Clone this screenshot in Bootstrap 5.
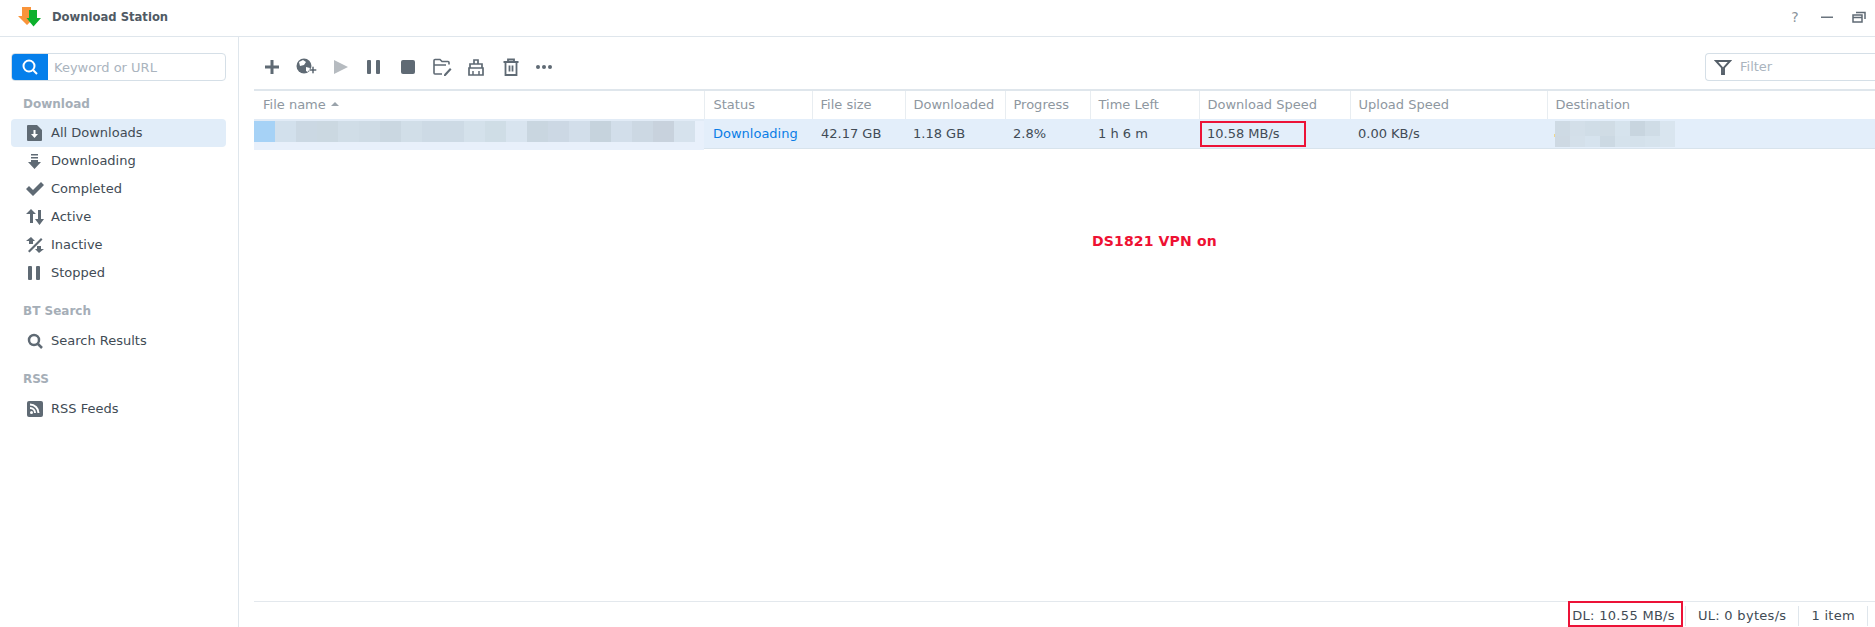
<!DOCTYPE html>
<html lang="en"><head><meta charset="utf-8"><title>Download Station</title>
<link href="https://cdn.jsdelivr.net/npm/bootstrap@5.3.0/dist/css/bootstrap.min.css" rel="stylesheet">
<style>
html,body{height:100%}
body{font-family:"DejaVu Sans",Verdana,sans-serif;font-size:13px;color:#414b55;background:#fff;overflow:hidden}
.app-shell{width:1875px;height:627px}
.title-bar{height:37px;border-bottom:1px solid #dfe6ec;padding:0 9px 0 18px}
.title-logo{margin-top:-2px}
.title-text{font-weight:700;font-size:11.6px;color:#505a64;margin-left:10px;margin-top:-1px}
.help-mark{width:14px;text-align:center;font-size:14px;color:#8b949c}
.win-ctl{gap:18px;margin-top:-2px}
.side-pane{width:239px;border-right:1px solid #dfe6ec;padding:16px 12px 0 11px}
.search-box{height:28px;border:1px solid #d5dfe7;border-radius:4px;overflow:hidden}
.search-btn{width:37px;background:#057feb;margin:-1px 0 -1px -1px}
.search-hint{color:#aab4be;padding:1px 0 0 6px;font-size:13px}
.sec-label{font-weight:700;font-size:12px;color:#a5aeb7;padding-left:12px;line-height:16px}
.nav-row{height:28px;border-radius:4px;padding-left:13px}
.nav-row.is-on{background:#e1edf9}
.nav-icon{width:22px;height:20px;flex:none;margin-right:5px}
.main-pane{min-width:0;padding:0 0 0 15px}
.tool-bar{height:52px;padding:8px 0 0 7px}
.tool-ico{width:22px;height:22px;flex:none;margin-right:12px}
.filter-box{width:170px;height:28px;border:1px solid #d5dfe7;border-right:0;border-radius:4px 0 0 4px;color:#aab4be;padding-left:8px}
.grid-tbl{table-layout:fixed;width:1621px;border-collapse:collapse;margin:0}
.grid-tbl th{height:29px;font-weight:400;color:#8e979f;padding:0 8px;border-top:2px solid #dfe6ec;border-right:1px solid #e8edf1;white-space:nowrap;font-size:13px}
.grid-tbl th:first-child{padding-left:9px}
.grid-tbl th:last-child{border-right:0}
.grid-tbl td{height:29px;background:#e3eefa;border-bottom:1px solid #d8e3ec;padding:0 8px;color:#414b55;white-space:nowrap;position:relative;font-size:13px}
.grid-tbl th:nth-child(2),.grid-tbl td:nth-child(2),.grid-tbl td:nth-child(3){padding-left:9px}
.grid-tbl td.name-cell{background:#e8f0fb;border-bottom:0;padding:0}
.grid-tbl td.name-cell::after{content:"";position:absolute;left:0;right:0;bottom:-2px;height:2px;background:#e8f0fb}
.grid-tbl td.dest-cell{padding:2px 0 0;vertical-align:top}
.mosaic-row{padding-top:2px;background:linear-gradient(#e1ebf6 2px,transparent 2px)}
.mosaic-row span{width:21px;height:21px;display:block}
.dest-grid{display:grid;grid-template-columns:repeat(8,15px);grid-template-rows:15px 11px;margin-left:8px;position:relative}
.dest-grid::before{content:"";position:absolute;left:-1px;top:13px;width:1px;height:3px;background:#efd78c}
.sort-up{display:inline-block;border:4px solid transparent;border-bottom:4px solid #9aa3ab;border-top:0;margin-left:5px;vertical-align:middle;position:relative;top:-2px}
.status-link{color:#0a7de6}
.mark-box{border:2px solid #ec1237;position:absolute;pointer-events:none}
.mark-speed{left:1px;top:2px;width:106px;height:26px}
.note-text{color:#ee1133;font-weight:700;font-size:14px;letter-spacing:.15px;margin-top:82px;padding-left:838px;line-height:20px}
.status-bar{height:26px;border-top:1px solid #e3e8ed;padding:3px 7px 0 0;letter-spacing:.3px}
.stat-cell{position:relative;height:20px;padding:0 12px;border-right:1px solid #dfe6ec;line-height:20px;white-space:nowrap}
.stat-cell:first-child{border-right:0;padding-right:10px}
.stat-sep{width:1px;height:20px;background:#dfe6ec}
.mark-dl{left:8px;top:-5px;width:115px;height:26px}
</style></head>
<body>
<div class="app-shell d-flex flex-column">
 <header class="title-bar d-flex align-items-center flex-none">
  <svg class="title-logo" width="24" height="20" viewBox="0 0 24 20"><path d="M4 0h9v9h5l-9 9-9-9h4z" fill="#f9943a"/><path d="M11 3h8v8h4l-7.500 8.500L8.500 11H11z" fill="#0cb02c"/></svg>
  <span class="title-text">Download Station</span>
  <div class="win-ctl ms-auto d-flex align-items-center">
   <span class="help-mark">?</span>
   <svg width="14" height="14" viewBox="0 0 14 14"><rect x="1" y="6.500" width="12" height="1.500" fill="#6a747e"/></svg>
   <svg width="14" height="14" viewBox="0 0 14 14" fill="none" stroke="#5f6a74" stroke-width="1.500"><rect x="1" y="5" width="9" height="7"/><path d="M1 7.500h9M4 2.500h9V9" /></svg>
  </div>
 </header>
 <div class="d-flex flex-grow-1" style="min-height:0">
  <aside class="side-pane flex-none">
   <div class="search-box d-flex align-items-stretch">
    <div class="search-btn d-flex align-items-center justify-content-center"><svg width="16" height="16" viewBox="0 0 16 16" fill="none" stroke="#fff" stroke-width="2"><circle cx="7" cy="7" r="5.500"/><path d="M11 11l4 4"/></svg></div>
    <div class="search-hint d-flex align-items-center">Keyword or URL</div>
   </div>
   <div class="sec-label" style="margin-top:15px;margin-bottom:7px">Download</div>
   <div class="nav-row is-on d-flex align-items-center"><svg class="nav-icon" viewBox="0 0 22 20"><path d="M4 2h9l5 5v10a1 1 0 0 1-1 1H4a1 1 0 0 1-1-1V3a1 1 0 0 1 1-1z" fill="#5f6a74"/><path d="M9.500 7h2v4H14l-3.500 4L7 11h2.500z" fill="#fff"/></svg><span>All Downloads</span></div>
   <div class="nav-row d-flex align-items-center"><svg class="nav-icon" viewBox="0 0 22 20"><path d="M7 3h7v1.500H7zM7 6h7v1.500H7zM7 9h7v2h3l-6.500 7L4 11h3z" fill="#5f6a74"/></svg><span>Downloading</span></div>
   <div class="nav-row d-flex align-items-center"><svg class="nav-icon" viewBox="0 0 22 20"><path d="M2 10l3-3 4 4 8-8 3 3-11 11z" fill="#5f6a74"/></svg><span>Completed</span></div>
   <div class="nav-row d-flex align-items-center"><svg class="nav-icon" viewBox="0 0 22 20"><path d="M7 2l5 5H9v9H6V7H2zM14 3h3v9h3l-4.500 6L11 12h3z" fill="#5f6a74"/></svg><span>Active</span></div>
   <div class="nav-row d-flex align-items-center"><svg class="nav-icon" viewBox="0 0 22 20"><path d="M7 2l4 4H9v3H5V6H2zM15 18l-4-4h2v-3h4v3h3zM4 16L17 3l1.500 1.500L5.500 17.500z" fill="#5f6a74"/></svg><span>Inactive</span></div>
   <div class="nav-row d-flex align-items-center"><svg class="nav-icon" viewBox="0 0 22 20"><rect x="4" y="3" width="4" height="14" rx="1" fill="#5f6a74"/><rect x="12" y="3" width="4" height="14" rx="1" fill="#5f6a74"/></svg><span>Stopped</span></div>
   <div class="sec-label" style="margin-top:16px;margin-bottom:8px">BT Search</div>
   <div class="nav-row d-flex align-items-center"><svg class="nav-icon" viewBox="0 0 22 20" fill="none" stroke="#5f6a74" stroke-width="2.500"><circle cx="10" cy="9" r="5"/><path d="M14 13l4 4"/></svg><span>Search Results</span></div>
   <div class="sec-label" style="margin-top:16px;margin-bottom:8px">RSS</div>
   <div class="nav-row d-flex align-items-center"><svg class="nav-icon" viewBox="0 0 22 20"><rect x="3" y="2" width="16" height="16" rx="2" fill="#5f6a74"/><circle cx="7.500" cy="13.500" r="1.500" fill="#fff"/><path d="M6 9a5 5 0 0 1 5 5M6 5.500A8.500 8.500 0 0 1 14.500 14" fill="none" stroke="#fff" stroke-width="2"/></svg><span>RSS Feeds</span></div>
  </aside>
  <main class="main-pane flex-grow-1 d-flex flex-column">
   <div class="tool-bar d-flex align-items-center">
    <svg class="tool-ico" viewBox="0 0 22 22"><path d="M9.500 4h3v5.500H18v3h-5.500V18h-3v-5.500H4v-3h5.500z" fill="#5f6a74"/></svg>
    <svg class="tool-ico" viewBox="0 0 22 22"><circle cx="9" cy="10" r="7.500" fill="#5f6a74"/><path d="M4 6l4-2 3 2-2 3-4 1zM11 11l4 1-2 4-2-1z" fill="#fff"/><path d="M14.500 13h2.500v-2.500h2V13h2.500v2H19v2.500h-2V15h-2.500z" fill="#5f6a74" stroke="#fff" stroke-width=".5"/></svg>
    <svg class="tool-ico" viewBox="0 0 22 22"><path d="M5 4l14 7-14 7z" fill="#b6bbc0"/></svg>
    <svg class="tool-ico" viewBox="0 0 22 22"><rect x="4" y="4" width="4" height="14" rx="1" fill="#5f6a74"/><rect x="13" y="4" width="4" height="14" rx="1" fill="#5f6a74"/></svg>
    <svg class="tool-ico" viewBox="0 0 22 22"><rect x="4" y="4" width="14" height="14" rx="2" fill="#5f6a74"/></svg>
    <svg class="tool-ico" viewBox="0 0 22 22" fill="none" stroke="#5f6a74" stroke-width="1.600"><path d="M11 18H4a1 1 0 0 1-1-1V4.500a1 1 0 0 1 1-1h5l2 2h6a1 1 0 0 1 1 1v2M3 9h12"/><path d="M13 18.500l6-6.500 1.500 1.500-6 6.500h-1.500z" fill="#5f6a74" stroke="none"/></svg>
    <svg class="tool-ico" viewBox="0 0 22 22" fill="none" stroke="#5f6a74" stroke-width="1.700"><path d="M9 8V4h4v4M5 12V8h12v4M4 12h14v7H4z"/><path d="M8 15v4M14 15v4" stroke-width="1.500"/></svg>
    <svg class="tool-ico" viewBox="0 0 22 22" fill="none" stroke="#5f6a74" stroke-width="1.800"><path d="M4.500 6h15M9 6V3.500h6V6M6.500 6v13h11V6M10.500 9.500v6M13.500 9.500v6"/></svg>
    <svg class="tool-ico" viewBox="0 0 22 22"><circle cx="5" cy="11" r="2" fill="#5f6a74"/><circle cx="11" cy="11" r="2" fill="#5f6a74"/><circle cx="17" cy="11" r="2" fill="#5f6a74"/></svg>
    <div class="filter-box ms-auto d-flex align-items-center">
     <svg width="18" height="18" viewBox="0 0 18 18" class="me-2" fill="none" stroke="#555f69" stroke-width="1.900"><path d="M2 3h14L10 9.500V16H8V9.500z"/></svg>Filter
    </div>
   </div>
   <table class="grid-tbl">
    <colgroup><col style="width:450px"><col style="width:108px"><col style="width:93px"><col style="width:100px"><col style="width:85px"><col style="width:109px"><col style="width:151px"><col style="width:197px"><col style="width:328px"></colgroup>
    <thead><tr><th>File name<span class="sort-up"></span></th><th>Status</th><th>File size</th><th>Downloaded</th><th>Progress</th><th>Time Left</th><th>Download Speed</th><th>Upload Speed</th><th>Destination</th></tr></thead>
    <tbody><tr>
     <td class="name-cell align-top"><div class="mosaic-row d-flex">
      <span style="background:#a6d2f6"></span><span style="background:#d2e0ec"></span><span style="background:#cbd8e3"></span><span style="background:#cbd8e1"></span><span style="background:#d0dde7"></span><span style="background:#cedbe5"></span><span style="background:#cad7e1"></span><span style="background:#d1dee8"></span><span style="background:#cddae5"></span><span style="background:#cddae5"></span><span style="background:#d4e1eb"></span><span style="background:#cfdde6"></span><span style="background:#d8e4ef"></span><span style="background:#c9d6e0"></span><span style="background:#ccd8e4"></span><span style="background:#d2deea"></span><span style="background:#c6d3dd"></span><span style="background:#d2deea"></span><span style="background:#ccd8e3"></span><span style="background:#c8d2dd"></span><span style="background:#d6e2ed"></span></div></td>
     <td><span class="status-link">Downloading</span></td><td>42.17 GB</td><td>1.18 GB</td><td>2.8%</td><td>1 h 6 m</td>
     <td><span class="mark-box mark-speed"></span>10.58 MB/s</td><td>0.00 KB/s</td>
     <td class="dest-cell"><div class="dest-grid">
      <span style="background:#cedae4"></span><span style="background:#d3dfe9"></span><span style="background:#d0dde7"></span><span style="background:#d0dce5"></span><span style="background:#d6e3ed"></span><span style="background:#c8d5df"></span><span style="background:#cfdce6"></span><span style="background:#d9e5ef"></span>
      <span style="background:#ced9e3"></span><span style="background:#d4e0ea"></span><span style="background:#d6e3ee"></span><span style="background:#ccd9e3"></span><span style="background:#d5e2ec"></span><span style="background:#d4e1eb"></span><span style="background:#d6e3ed"></span><span style="background:#d9e5ef"></span></div></td>
    </tr></tbody>
   </table>
   <div class="note-text">DS1821 VPN on</div>
   <div class="status-bar d-flex align-items-center justify-content-end mt-auto">
    <div class="stat-cell"><span class="mark-box mark-dl"></span>DL: 10.55 MB/s</div>
    <div class="stat-sep"></div>
    <div class="stat-cell">UL: 0 bytes/s</div>
    <div class="stat-cell">1 item</div>
   </div>
  </main>
 </div>
</div>
<script src="https://cdn.jsdelivr.net/npm/bootstrap@5.3.0/dist/js/bootstrap.bundle.min.js"></script>
</body></html>
